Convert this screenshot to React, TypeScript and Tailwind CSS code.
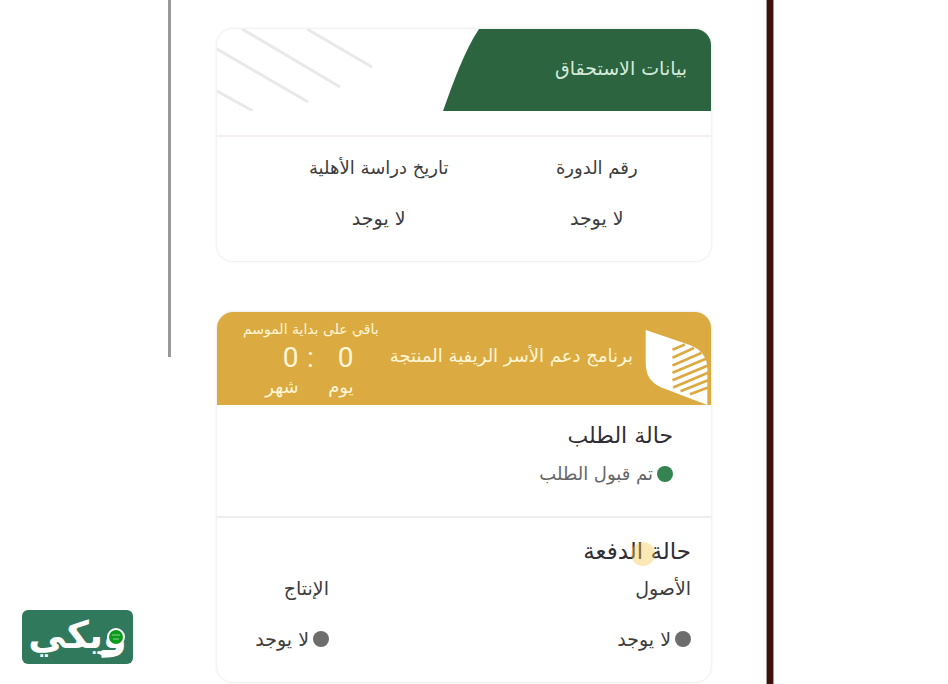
import type { ReactNode } from 'react';

const details = [
  { label: 'رقم الدورة', value: 'لا يوجد' },
  { label: 'تاريخ دراسة الأهلية', value: 'لا يوجد' },
];

const countdown = [
  { value: 0, unit: 'يوم' },
  { value: 0, unit: 'شهر' },
];

const payments = [
  { label: 'الأصول', value: 'لا يوجد' },
  { label: 'الإنتاج', value: 'لا يوجد' },
];

const Card = ({ children }: { children: ReactNode }) => (
  <section className="w-full overflow-hidden rounded-2xl bg-white shadow-[0_0_3px_#dcdcdc]">
    {children}
  </section>
);

const Leaf = () => (
  <svg viewBox="26 24 188 224" className="h-[75px] w-[63px] shrink-0" aria-hidden="true">
    <path
      d="M28 24 L160 69 C196 84 212 108 212 138 V248 L75 196 C42 182 28 158 28 122 Z"
      fill="#fff"
    />
    <path
      d="M108 83 L145 67 M108 107 L172 78 M108 130 L194 93 M108 152 L208 110 M108 174 L214 130 M110 196 L214 152 M132 207 L214 174 M160 216 L214 196"
      stroke="#dbab41"
      strokeWidth="8"
    />
  </svg>
);

const EligibilityCard = () => (
  <Card>
    <header className="flex h-[108px] items-start justify-between border-b-2 border-[#f6f0ee]">
      <div className="grid h-[82px] w-[268px] shrink-0">
        <svg viewBox="0 0 268 82" className="col-start-1 row-start-1 h-full w-full" aria-hidden="true">
          <path d="M36 0 H268 V82 H0 C11 51 22 21 36 0 Z" fill="#2b643e" />
        </svg>
        <h2 className="col-start-1 row-start-1 self-center pr-6 pb-1 text-[19px] text-[#d5eadb]">
          بيانات الاستحقاق
        </h2>
      </div>
      <svg viewBox="0 0 156 82" className="h-[82px] w-[156px]" aria-hidden="true">
        <path
          d="M90 0 L155 38 M25 0 L123 58 M0 20 L91 73 M0 62 L36 82"
          stroke="#e9e9e9"
          strokeWidth="3"
          fill="none"
        />
      </svg>
    </header>
    <dl className="flex pt-4 pr-1 pb-7">
      {details.map((item) => (
        <div key={item.label} className="flex flex-col items-center gap-5 first:w-[45%] last:w-[44%]">
          <dt className="text-lg leading-[30px] whitespace-nowrap">{item.label}</dt>
          <dd className="text-[19px] leading-[30px] whitespace-nowrap">{item.value}</dd>
        </div>
      ))}
    </dl>
  </Card>
);

const ProgramCard = () => (
  <Card>
    <header className="flex h-[93px] items-end justify-between bg-[#dbab41] pr-[3px] text-[#fff6d8]">
      <div className="flex items-end gap-3">
        <Leaf />
        <h2 className="self-center pb-6 text-lg whitespace-nowrap">
          برنامج دعم الأسر الريفية المنتجة
        </h2>
      </div>
      <div className="flex shrink-0 flex-col self-start pt-2 pl-[26px]">
        <p className="text-sm leading-[18px] whitespace-nowrap">باقي على بداية الموسم</p>
        <div className="flex pr-[25px]">
          {countdown.map((part, i) => (
            <div key={part.unit} className="flex w-[55px] flex-col">
              <div className="flex gap-6 font-[Roboto] text-[28px] leading-[40px]">
                <span>{part.value}</span>
                {i === 0 && <span>:</span>}
              </div>
              <span className="text-lg leading-[18px]">{part.unit}</span>
            </div>
          ))}
        </div>
      </div>
    </header>

    <div className="flex h-[113px] flex-col gap-2 border-b-2 border-[#eeeeee] pt-4 pr-[38px]">
      <h3 className="text-[22px] leading-[30px] text-[#2f2d35]">حالة الطلب</h3>
      <p className="flex items-center gap-1 text-lg leading-[30px] text-[#666]">
        <span className="size-4 rounded-full bg-[#35834f]" />
        تم قبول الطلب
      </p>
    </div>

    <div className="flex flex-col pt-4 pr-5 pb-7">
      <div className="grid w-fit">
        <h3 className="col-start-1 row-start-1 text-[23px] leading-[34px] text-[#2f2d35]">
          حالة الدفعة
        </h3>
        <span className="col-start-1 row-start-1 mt-2 mr-9 size-6 rounded-full bg-[#f6c945]/40" />
      </div>
      <dl className="flex pt-[5px]">
        {payments.map((item) => (
          <div key={item.label} className="flex flex-col gap-[21px] first:w-[362px]">
            <dt className="text-[19px] leading-[30px]">{item.label}</dt>
            <dd className="flex items-center gap-1 text-[19px] leading-[30px] whitespace-nowrap">
              <span className="size-4 rounded-full bg-[#6d6d6d]" />
              {item.value}
            </dd>
          </div>
        ))}
      </dl>
    </div>
  </Card>
);

const WikiBadge = () => (
  <div className="absolute bottom-5 left-[22px] flex h-[54px] w-[111px] items-center justify-center rounded-md bg-[#30795d] text-white">
    <span className="pb-1 text-[38px] leading-none font-bold">ويكي</span>
    <svg viewBox="0 0 111 54" className="absolute inset-0 h-full w-full" aria-hidden="true">
      <circle cx="94" cy="27" r="8" fill="#0a9a1c" stroke="#fff" strokeWidth="2" />
      <path d="M90 25 H98 M91 29 H97" stroke="#8fd596" strokeWidth="1" />
      <path d="M75 43 L81 40 H94 V46 H81 Z" fill="#fff" />
    </svg>
  </div>
);

const App = () => (
  <div
    lang="ar"
    className="relative grid min-h-screen grid-cols-[168fr_606fr_174fr] overflow-hidden bg-white font-['DejaVu_Sans',sans-serif] text-[#3d3d3d]"
  >
    <div className="col-start-2 flex items-stretch">
      <div className="h-[357px] w-[3px] shrink-0 bg-[#999]" />
      <main dir="rtl" className="flex min-w-0 flex-1 flex-col gap-[51px] pt-[29px] pr-[55px] pl-[46px]">
        <EligibilityCard />
        <ProgramCard />
      </main>
      <div className="w-2 shrink-0 border-x border-[#a79a97] bg-[#3c120c]" />
    </div>
    <WikiBadge />
  </div>
);

export default App;
